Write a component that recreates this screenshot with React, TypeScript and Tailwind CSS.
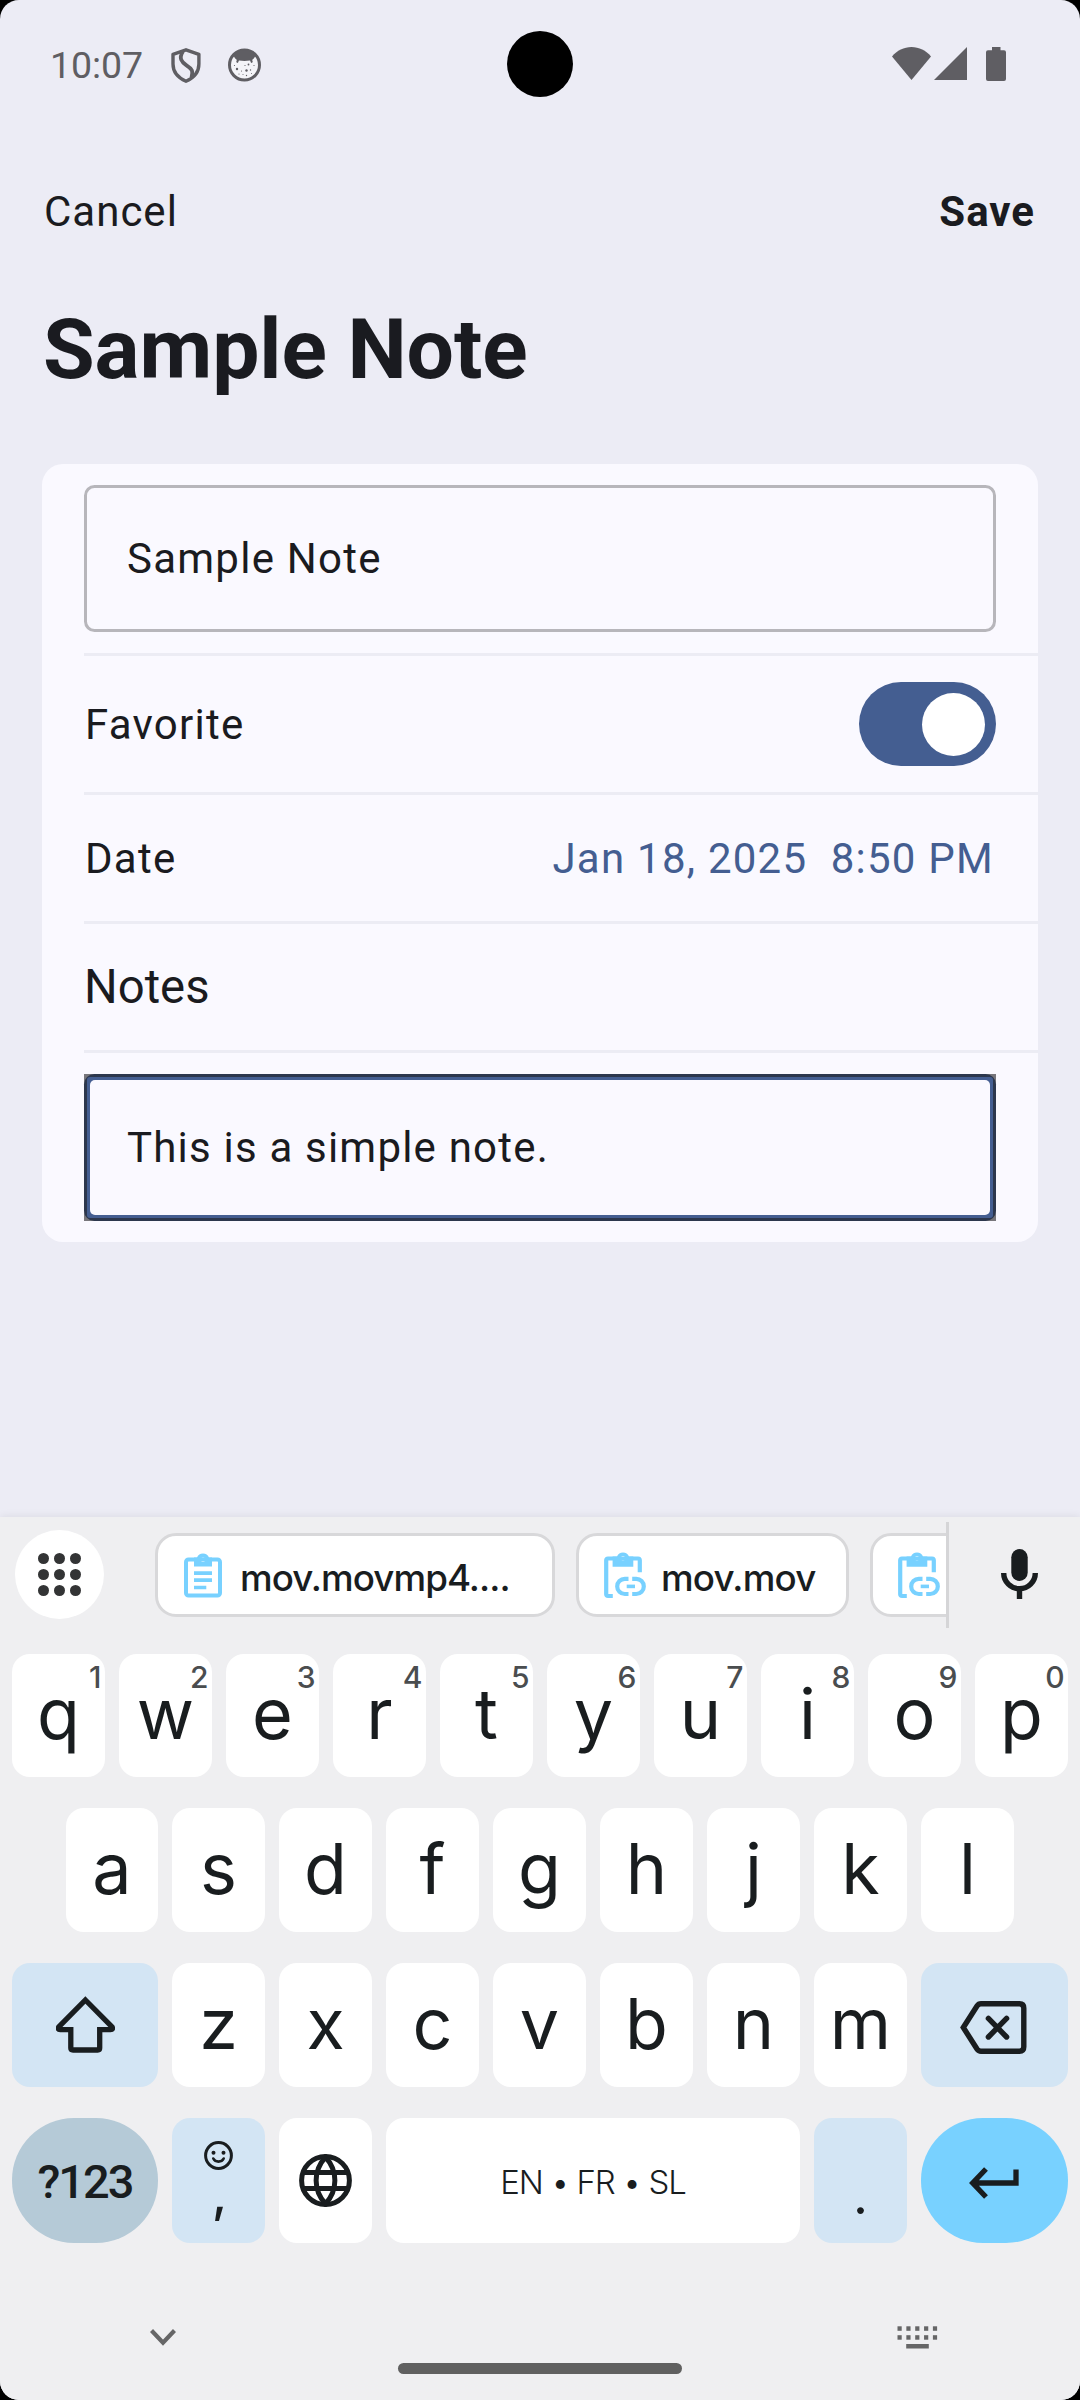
import React from "react";

const ink = "#191d1f";
const sky = "#78d1ff";

function StatusBar() {
  return (
    <div className="relative flex h-[130px] shrink-0 items-center justify-between pr-[74px] pl-[50px] text-[#5f5e63]">
      <div className="flex items-center">
        <span className="w-[121px] text-[37.5px] leading-[44px] tracking-[-0.1px]">10:07</span>
        <svg width="30" height="35" viewBox="0 0 30 35" fill="none" stroke="currentColor" strokeWidth="3.4" strokeLinejoin="round">
          <path d="M15 1.8 L27.9 6.3 V16 C27.9 24 22.5 30 15 33.2 C7.5 30 2 24 2 16 V6.3 Z" />
          <path d="M12 3.5 C7.5 10 10.5 14 15.5 17.3 C21 20.8 22.5 23 20.5 29.5" strokeWidth="3.8" />
        </svg>
        <svg className="ml-[26.5px]" width="33" height="34" viewBox="0 0 33 34">
          <circle cx="16.5" cy="17" r="15" fill="#f4f4f8" stroke="currentColor" strokeWidth="3" />
          <path d="M5.5 7 C10 0.5 23 0.5 27.5 7 C27 10 24.5 11.5 24 12 C25 13 25 14.5 23.5 15 C22.5 14.5 22.5 13 22 12.5 C18 13 15 13 11 12.5 C10.5 13 10.5 14.5 9.5 15 C8 14.5 8 13 9 12 C8.5 11.5 6 10 5.5 7 Z" fill="currentColor" />
          <g fill="currentColor">
            <circle cx="9" cy="21" r="1.2" /><circle cx="18.5" cy="22.5" r="1.2" /><circle cx="20.5" cy="16.5" r="0.9" />
            <circle cx="13.5" cy="23" r="0.6" /><circle cx="22.5" cy="22" r="0.7" /><circle cx="17" cy="17.5" r="0.6" />
            <circle cx="6.5" cy="17.5" r="0.6" /><circle cx="11" cy="26" r="0.6" /><circle cx="18.5" cy="27.5" r="0.7" />
            <circle cx="26" cy="17.5" r="0.6" /><circle cx="15" cy="26.5" r="0.5" /><circle cx="23.5" cy="25.5" r="0.5" />
          </g>
        </svg>
      </div>
      <div className="absolute top-[31px] left-[507px] size-[66px] rounded-full bg-black" />
      <div className="flex items-start pb-[2px]">
        <svg width="39" height="33" viewBox="0 0 39 33" fill="currentColor">
          <path d="M19.5 33 L0 9.5 C5 3.5 12 0 19.5 0 C27 0 34 3.5 39 9.5 Z" />
        </svg>
        <svg className="ml-[3px]" width="33" height="33" viewBox="0 0 33 33" fill="currentColor">
          <path d="M33 0 V33 H0 Z" />
        </svg>
        <svg className="ml-[19px]" width="20" height="34" viewBox="0 0 20 34" fill="currentColor">
          <path d="M6 0 H14.5 V3.3 H18 Q20 3.3 20 5.3 V32 Q20 34 18 34 H2 Q0 34 0 32 V5.3 Q0 3.3 2 3.3 H6 Z" />
        </svg>
      </div>
    </div>
  );
}

function NoteForm() {
  return (
    <div className="mx-[42px] h-[778px] shrink-0 rounded-[21px] bg-[#faf9ff] pl-[42px] text-[42px] tracking-[1.25px] text-[#1a1b20]">
      <div className="h-[192px] border-b-[3px] border-[#ececf4] pt-[21px] pr-[42px]">
        <div className="flex h-[147px] items-center rounded-[10.5px] border-[3px] border-[#b7b6bb] pl-[40px]">Sample Note</div>
      </div>
      <div className="flex h-[139px] items-center justify-between border-b-[3px] border-[#ececf4] pr-[42px]">
        <span className="pl-px">Favorite</span>
        <span className="flex h-[84px] w-[137px] items-center justify-end rounded-full bg-[#445e91] pr-[11px]">
          <span className="size-[63px] rounded-full bg-white" />
        </span>
      </div>
      <div className="flex h-[129px] items-center justify-between border-b-[3px] border-[#ececf4] pr-[44px]">
        <span className="pl-px">Date</span>
        <span className="whitespace-pre text-[#445e91]">Jan 18, 2025  8:50 PM</span>
      </div>
      <div className="flex h-[129px] items-center border-b-[3px] border-[#ececf4] text-[47.25px] tracking-[0px]">Notes</div>
      <div className="pt-[21px] pr-[42px]">
        <div className="h-[147px] bg-[#77767b]">
          <div className="h-[147px] rounded-[10.5px] bg-[#2c374d] p-[3px]">
            <div className="h-[141px] rounded-[3px] bg-[#445e91] p-[3px]">
              <div className="flex h-[135px] items-center rounded-[5px] bg-[#faf9ff] pl-[37px] tracking-[1.2px]">This is a simple note.</div>
            </div>
          </div>
        </div>
      </div>
    </div>
  );
}

function ClipboardText() {
  return (
    <svg className="shrink-0" width="38" height="45" viewBox="0 0 38 45">
      <rect x="2" y="6.5" width="34" height="36" rx="2.5" fill="none" stroke={sky} strokeWidth="4" />
      <path fill={sky} fillRule="evenodd" d="M10 4.5 H13 A6.5 6.5 0 0 1 25 4.5 H28 V13.5 H10 Z M19 4.5 a2.3 2.3 0 1 0 0.01 0 Z" />
      <path d="M10 20.2 H28 M10 27.2 H28 M10 34.5 H22.3" stroke={sky} strokeWidth="3.7" />
    </svg>
  );
}

function ClipboardLink() {
  return (
    <svg className="shrink-0" width="42" height="47" viewBox="0 0 42 47" fill="none" stroke={sky} strokeWidth="4.2">
      <path d="M8.8 44 H4 Q2.2 44 2.2 42.2 V8.3 Q2.2 6.5 4 6.5 H34 Q35.8 6.5 35.8 8.3 V20.3" />
      <path stroke="none" fill={sky} fillRule="evenodd" d="M8.6 4.5 H13 A6.5 6.5 0 0 1 25 4.5 H29.3 V14.7 H8.6 Z M19 4 a2.3 2.3 0 1 0 0.01 0 Z" />
      <path d="M24.5 26.8 H20.8 A7.6 7.6 0 0 0 20.8 42 H24.5 M28.2 26.8 H32.2 A7.6 7.6 0 0 1 32.2 42 H28.2" />
      <path d="M22.7 34.4 H31" strokeWidth="3.6" />
    </svg>
  );
}

function SuggestionBar() {
  return (
    <div className="flex h-[137px] shrink-0">
      <div className="mt-[13px] ml-[15px] flex size-[89px] items-center justify-center rounded-full bg-white">
        <div className="grid grid-cols-3 gap-[5px]">
          {Array.from({ length: 9 }, (_, i) => (
            <span key={i} className="size-[10.8px] rounded-full bg-[#333435]" />
          ))}
        </div>
      </div>
      <div className="ml-[51px] flex w-[791px] gap-[21px] overflow-hidden pt-[16px] text-[36.75px] font-medium text-[#191d1f]">
        <div className="flex h-[84px] w-[400px] shrink-0 items-center rounded-[21px] border-[3px] border-[#d8d8da] bg-white pl-[26px]">
          <ClipboardText />
          <span className="ml-[18px] pt-[5px] tracking-[-0.95px]">mov.movmp4....</span>
        </div>
        <div className="flex h-[84px] w-[273px] shrink-0 items-center rounded-[21px] border-[3px] border-[#d8d8da] bg-white pl-[25px]">
          <ClipboardLink />
          <span className="ml-[15px] pt-[5px] tracking-[-0.8px]">mov.mov</span>
        </div>
        <div className="flex h-[84px] w-[273px] shrink-0 items-center rounded-[21px] border-[3px] border-[#d8d8da] bg-white pl-[25px]">
          <ClipboardLink />
        </div>
      </div>
      <div className="mt-[5px] h-[106px] w-[3px] bg-[#d5d5d7]" />
      <svg className="mt-[32px] ml-[52px]" width="38" height="50" viewBox="0 0 38 50" fill="none" stroke={ink}>
        <rect x="10.3" y="0" width="16.4" height="32" rx="8.2" fill={ink} stroke="none" />
        <path d="M2.7 24 A15.8 15.8 0 0 0 34.3 24 M18.5 39 V50" strokeWidth="5.4" />
      </svg>
    </div>
  );
}

function Key({ label, hint, size = "w-[93px]" }: { label: string; hint?: string; size?: string }) {
  return (
    <div className={`${size} relative flex shrink-0 items-center justify-center rounded-[18px] bg-white pb-[3px] text-[70px] leading-[80px] font-[380] text-[#191d1f]`}>
      {label}
      {hint && <span className="absolute top-[5px] right-[4px] text-[30px] leading-[36px] font-medium tracking-[-0.5px] text-[#4a4d4f]">{hint}</span>}
    </div>
  );
}

function Keyboard() {
  return (
    <div className="flex h-[883px] shrink-0 flex-col bg-[#efeff1] font-['Inter',sans-serif] shadow-[0_-1px_8px_rgba(0,0,0,0.07)]">
      <SuggestionBar />
      <div className="flex h-[123px] gap-[14px] pl-[12px]">
        {"qwertyuiop".split("").map((c, i) => (
          <Key key={c} label={c} hint={String((i + 1) % 10)} />
        ))}
      </div>
      <div className="mt-[31px] flex h-[124px] gap-[14px] pl-[66px]">
        {"asdfghjkl".split("").map((c, i) => (
          <Key key={c} label={c} size={i === 0 ? "w-[92px]" : "w-[93px]"} />
        ))}
      </div>
      <div className="mt-[31px] flex h-[124px] gap-[14px] pl-[12px]">
        <div className="flex w-[146px] items-start justify-center rounded-[18px] bg-[#d3e5f4] pt-[33px]">
          <svg width="59" height="57" viewBox="0 0 59 57" fill="none" stroke={ink} strokeWidth="5.3">
            <path d="M29.4 4 L56 30.8 Q57.5 33.7 54.5 33.7 H43.7 V52 Q43.7 54 41.7 54 H17 Q14.8 54 14.8 52 V33.7 H4.2 Q1.2 33.7 2.8 30.8 Z" />
          </svg>
        </div>
        {"zxcvbnm".split("").map((c) => (
          <Key key={c} label={c} />
        ))}
        <div className="flex w-[147px] items-start rounded-[18px] bg-[#d3e5f4] pt-[38px] pl-[39px]">
          <svg width="67" height="53" viewBox="0 0 67 53" fill="none" stroke={ink} strokeWidth="5.4">
            <path d="M3.3 26.5 L17 5 Q18.5 2.8 21 2.8 H59.5 Q63.8 2.8 63.8 7.2 V45.8 Q63.8 50.2 59.5 50.2 H21 Q18.5 50.2 17 48 Z" />
            <path d="M28.4 17.4 L46.6 36 M46.6 17.4 L28.4 36" strokeLinecap="round" />
          </svg>
        </div>
      </div>
      <div className="mt-[31px] flex h-[125px] gap-[14px] pl-[12px] text-[#191d1f]">
        <div className="flex w-[146px] items-center justify-center rounded-[62px] bg-[#b5cad7] pt-[4px] font-['Roboto'] text-[47px] font-medium tracking-[-2px]">?123</div>
        <div className="flex w-[93px] flex-col items-center rounded-[18px] bg-[#d3e5f4] pt-[23px]">
          <svg width="29" height="29" viewBox="0 0 29 29" fill="none" stroke={ink} strokeWidth="3">
            <circle cx="14.5" cy="14.5" r="12.9" />
            <circle cx="9.5" cy="11.7" r="2" fill={ink} stroke="none" />
            <circle cx="19.5" cy="11.7" r="2" fill={ink} stroke="none" />
            <path d="M9.3 17.5 Q10.8 20.6 14.5 20.6 Q18.2 20.6 19.7 17.5" strokeLinecap="round" strokeWidth="2.6" />
          </svg>
          <span className="pl-[2px] text-[50px] leading-[48px] font-medium">,</span>
        </div>
        <div className="flex w-[93px] items-start justify-center rounded-[18px] bg-white pt-[36px]">
          <svg width="53" height="53" viewBox="0 0 53 53" fill="none" stroke={ink} strokeWidth="5">
            <circle cx="26.5" cy="26.5" r="23.9" />
            <path d="M26.5 3 C14 17 14 36 26.5 50 C39 36 39 17 26.5 3 Z M4 18.5 H49 M4 34.5 H49" />
          </svg>
        </div>
        <div className="flex w-[414px] items-center justify-center rounded-[18px] bg-white pt-[4px] text-[33px] font-[350] tracking-[-1.1px]">EN • FR • SL</div>
        <div className="flex w-[93px] items-end justify-center rounded-[18px] bg-[#d3e5f4] pb-[17px] text-[52px] leading-[60px]">.</div>
        <div className="flex w-[147px] items-start rounded-[62px] bg-[#78d1ff] pt-[49px] pl-[48px]">
          <svg width="50" height="32" viewBox="0 0 50 32" fill="none" stroke={ink} strokeWidth="5.3">
            <path d="M17 2 L3.7 16 L17 30 M3.7 16 H47 V2.5" />
          </svg>
        </div>
      </div>
      <div className="flex items-start justify-between pt-[83px] pr-[142px] pl-[150px]">
        <svg className="mt-[3px]" width="26" height="17" viewBox="0 0 26 17" fill="none" stroke="#666667" strokeWidth="4.2">
          <path d="M1.5 1.5 L13 13.7 L24.5 1.5" />
        </svg>
        <svg width="41" height="23" viewBox="0 0 41 23" fill="#666667">
          {[0, 1, 2, 3, 4].map((i) => (
            <React.Fragment key={i}>
              <rect x={0.5 + 8.85 * i} y="0.3" width="4.2" height="4.5" />
              <rect x={0.5 + 8.85 * i} y="9.2" width="4.2" height="4.5" />
            </React.Fragment>
          ))}
          <rect x="9.2" y="18" width="22.6" height="4.5" />
        </svg>
      </div>
      <div className="mx-auto mt-[14px] h-[11px] w-[284px] rounded-full bg-[#606060]" />
    </div>
  );
}

export default function App() {
  return (
    <div className="h-[2400px] w-[1080px] bg-black font-['Roboto',sans-serif]">
      <div className="flex h-[2400px] flex-col overflow-hidden rounded-[19px] bg-[#ececf5]">
        <StatusBar />
        <div className="flex h-[164px] shrink-0 items-center justify-between pr-[45px] pb-[2px] pl-[44px] text-[42px] tracking-[1px] text-[#1a1b20]">
          <span>Cancel</span>
          <span className="font-bold">Save</span>
        </div>
        <div className="mb-[62px] flex h-[108px] shrink-0 items-center pt-[3px] pl-[43px] text-[84px] font-bold tracking-[-0.1px] text-[#1a1b20]">Sample Note</div>
        <NoteForm />
        <div className="flex-1" />
        <Keyboard />
      </div>
    </div>
  );
}
